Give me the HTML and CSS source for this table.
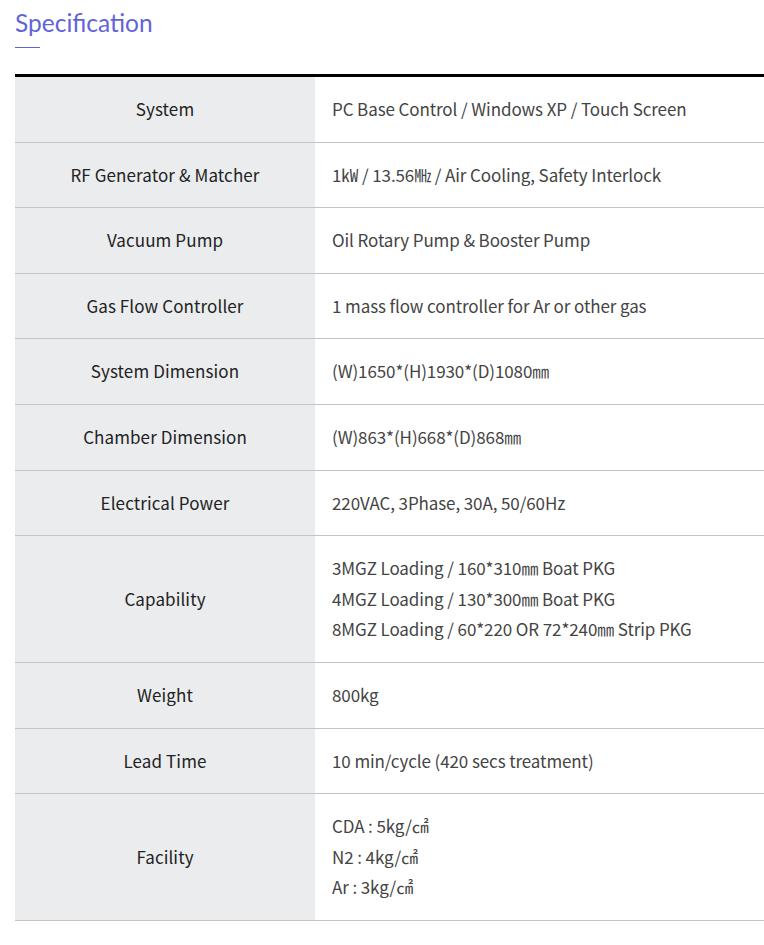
FILE: index.html
```html
<!DOCTYPE html>
<html>
<head>
<meta charset="utf-8">
<link rel="stylesheet" href="styles.css">
</head>
<body>
<div class="page">
  <h2 class="title">Specification</h2>
  <div class="title-bar"></div>
  <table class="spec">
    <tr><th>System</th><td>PC Base Control / Windows XP / Touch Screen</td></tr>
    <tr><th>RF Generator &amp; Matcher</th><td>1㎾ / 13.56㎒ / Air Cooling, Safety Interlock</td></tr>
    <tr><th>Vacuum Pump</th><td>Oil Rotary Pump &amp; Booster Pump</td></tr>
    <tr><th>Gas Flow Controller</th><td>1 mass flow controller for Ar or other gas</td></tr>
    <tr><th>System Dimension</th><td>(W)1650*(H)1930*(D)1080㎜</td></tr>
    <tr><th>Chamber Dimension</th><td>(W)863*(H)668*(D)868㎜</td></tr>
    <tr><th>Electrical Power</th><td>220VAC, 3Phase, 30A, 50/60Hz</td></tr>
    <tr><th>Capability</th><td>3MGZ Loading / 160*310㎜ Boat PKG<br>4MGZ Loading / 130*300㎜ Boat PKG<br>8MGZ Loading / 60*220 OR 72*240㎜ Strip PKG</td></tr>
    <tr><th>Weight</th><td>800kg</td></tr>
    <tr><th>Lead Time</th><td>10 min/cycle (420 secs treatment)</td></tr>
    <tr><th>Facility</th><td>CDA : 5kg/㎠<br>N2 : 4kg/㎠<br>Ar : 3kg/㎠</td></tr>
  </table>
</div>
</body>
</html>
```
FILE: styles.css
```css
html, body {
  margin: 0;
  padding: 0;
  background: #fff;
}
body {
  font-family: "Noto Sans CJK KR", "Noto Sans", sans-serif;
  color: #333;
}
.page {
  padding: 0 0 0 15px;
}
.title {
  margin: 0;
  padding-top: 4px;
  font-family: Lato, "Noto Sans", sans-serif;
  font-size: 24.5px;
  font-weight: 400;
  line-height: 37px;
  color: #5f64da;
}
.title-bar {
  width: 25px;
  height: 1px;
  background: #5f64da;
  margin-top: 6px;
}
.spec {
  margin-top: 26px;
  width: 749px;
  border-collapse: collapse;
  border-top: 3px solid #000;
}
.spec th, .spec td {
  border-bottom: 1px solid #c4c4c4;
  padding: 17px 0;
  font-size: 17px;
  line-height: 1.8;
  font-weight: 400;
  letter-spacing: -0.1px;
  vertical-align: middle;
}
.spec th {
  width: 300px;
  background: #ebecee;
  text-align: center;
  color: #222;
  letter-spacing: 0.1px;
}
.spec td {
  text-align: left;
  padding-left: 17px;
  color: #444;
}
```
